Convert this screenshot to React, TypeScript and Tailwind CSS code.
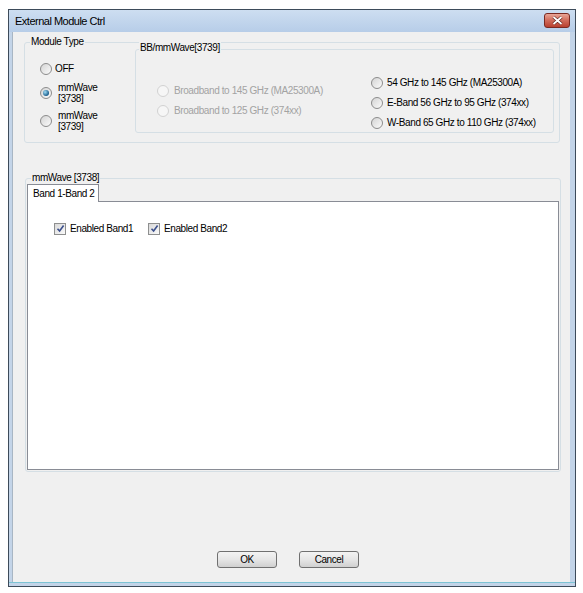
import React from 'react';

const font = "font-['Liberation_Sans',Arial,sans-serif]";

function Radio({ checked, disabled }: { checked?: boolean; disabled?: boolean }) {
  return (
    <span
      className={`w-[12px] h-[12px] rounded-full border flex items-center justify-center shrink-0 ${
        disabled
          ? 'border-[#d2d2d2] bg-[#f6f6f6]'
          : 'border-[#8c8c8c] bg-gradient-to-br from-[#d4d4d4] to-[#fbfbfb]'
      }`}
    >
      {checked && (
        <span className="w-[6px] h-[6px] rounded-full bg-[radial-gradient(circle_at_35%_35%,#9fdcf5,#1b5e8c_70%)]" />
      )}
    </span>
  );
}

function Check() {
  return (
    <span className="w-[12px] h-[12px] border border-[#8e8f8f] bg-gradient-to-br from-[#d9d9d9] to-[#fafafa] flex items-center justify-center shrink-0">
      <svg width="9" height="9" viewBox="0 0 9 9">
        <path d="M1.5 4.8 L3.6 7 L7.6 1.6" fill="none" stroke="#3b4f8c" strokeWidth="1.6" />
      </svg>
    </span>
  );
}

function GroupBox({
  label,
  className,
  labelClass,
  children,
}: {
  label: string;
  className: string;
  labelClass: string;
  children?: React.ReactNode;
}) {
  return (
    <div className={`relative border border-[#d5dfe5] rounded-[3px] shrink-0 ${className}`}>
      <span className={`absolute bg-[#f0f0f0] px-[1px] leading-[12px] whitespace-nowrap text-black ${labelClass}`}>
        {label}
      </span>
      {children}
    </div>
  );
}

function Button({ children }: { children: React.ReactNode }) {
  return (
    <div className="w-[60px] h-[17px] rounded-[3px] border border-[#707070] bg-gradient-to-b from-[#f3f3f3] via-[#e6e6e6] to-[#d0d0d0] flex items-center justify-center text-black leading-none">
      {children}
    </div>
  );
}

export default function App() {
  return (
    <div className={`w-[583px] h-[593px] bg-white pt-[9px] pl-[8px] ${font}`}>
      {/* window frame */}
      <div className="w-[568px] h-[578px] border border-[#3d4b5a] bg-[#c3d4e8] flex flex-col pl-[3px] pr-[4px]">
        {/* title bar */}
        <div className="h-[22px] -ml-[3px] -mr-[4px] bg-gradient-to-b from-[#cddef1] to-[#b7cde8] flex items-start justify-between pl-[6px] pr-[5px]">
          <span className="text-[11px] tracking-[-0.5px] text-black leading-[22px]">External Module Ctrl</span>
          <div className="mt-[3px] w-[26px] h-[15px] rounded-[3px] border border-[#7a2a22] bg-gradient-to-b from-[#e8a596] via-[#d06a5a] to-[#b8402f] flex items-center justify-center">
            <svg width="11" height="9" viewBox="0 0 11 9">
              <path d="M1.5 1 L9.5 8 M9.5 1 L1.5 8" stroke="#5a1f18" strokeWidth="3" />
              <path d="M1.5 1 L9.5 8 M9.5 1 L1.5 8" stroke="#ffffff" strokeWidth="1.8" />
            </svg>
          </div>
        </div>

        {/* client area */}
        <div className="w-[558px] h-[550px] bg-[#f0f0f0] border-l border-[#a8b6c4] flex flex-col text-[10px] tracking-[-0.4px] text-black whitespace-nowrap">
          {/* Module Type */}
          <GroupBox label="Module Type" className="ml-[11px] mt-[10px] w-[536px] h-[101px] flex" labelClass="left-[5px] -top-[7px]">
            <div className="w-[110px] shrink-0 flex flex-col pl-[15px] pt-[19px]">
              <div className="h-[13px] flex items-center gap-[3px]">
                <Radio />
                <span className="leading-[12px]">OFF</span>
              </div>
              <div className="mt-[7px] h-[22px] flex items-center gap-[6px]">
                <Radio checked />
                <span className="leading-[11px]">
                  mmWave
                  <br />
                  [3738]
                </span>
              </div>
              <div className="mt-[6px] h-[22px] flex items-center gap-[6px]">
                <Radio />
                <span className="leading-[11px]">
                  mmWave
                  <br />
                  [3739]
                </span>
              </div>
            </div>

            <GroupBox label="BB/mmWave[3739]" className="mt-[6px] w-[419px] h-[84px] flex" labelClass="left-[3px] -top-[8px]">
              <div className="w-[235px] shrink-0 flex flex-col gap-[7px] pl-[21px] pt-[34px] text-[#a3a3a3]">
                <div className="h-[13px] flex items-center gap-[5px]">
                  <Radio disabled />
                  <span>Broadband to 145 GHz (MA25300A)</span>
                </div>
                <div className="h-[13px] flex items-center gap-[5px]">
                  <Radio disabled />
                  <span>Broadband to 125 GHz (374xx)</span>
                </div>
              </div>
              <div className="flex flex-col gap-[7px] pt-[26px]">
                <div className="h-[13px] flex items-center gap-[4px]">
                  <Radio />
                  <span>54 GHz to 145 GHz (MA25300A)</span>
                </div>
                <div className="h-[13px] flex items-center gap-[4px]">
                  <Radio />
                  <span>E-Band 56 GHz to 95 GHz (374xx)</span>
                </div>
                <div className="h-[13px] flex items-center gap-[4px]">
                  <Radio />
                  <span>W-Band 65 GHz to 110 GHz (374xx)</span>
                </div>
              </div>
            </GroupBox>
          </GroupBox>

          {/* mmWave [3738] */}
          <GroupBox label="mmWave [3738]" className="ml-[12px] mt-[35px] w-[536px] h-[294px] flex flex-col" labelClass="left-[5px] -top-[7px]">
            <div className="ml-[1px] mt-[5px] flex">
              <div className="w-[72px] h-[18px] -mb-[1px] border border-b-0 border-[#898c95] bg-white relative z-10 pl-[5px] leading-[17px]">
                Band 1-Band 2
              </div>
            </div>
            <div className="ml-[1px] w-[532px] h-[269px] border border-[#898c95] bg-white flex items-start pl-[26px] pt-[19px]">
              <div className="w-[94px] flex items-center gap-[4px]">
                <Check />
                <span>Enabled Band1</span>
              </div>
              <div className="flex items-center gap-[4px]">
                <Check />
                <span>Enabled Band2</span>
              </div>
            </div>
          </GroupBox>

          {/* buttons */}
          <div className="mt-[79px] pl-[204px] flex gap-[22px]">
            <Button>OK</Button>
            <Button>Cancel</Button>
          </div>
        </div>
        <div className="h-[1px] -ml-[3px] -mr-[4px] bg-[#7cc3d4]" />
      </div>
    </div>
  );
}
